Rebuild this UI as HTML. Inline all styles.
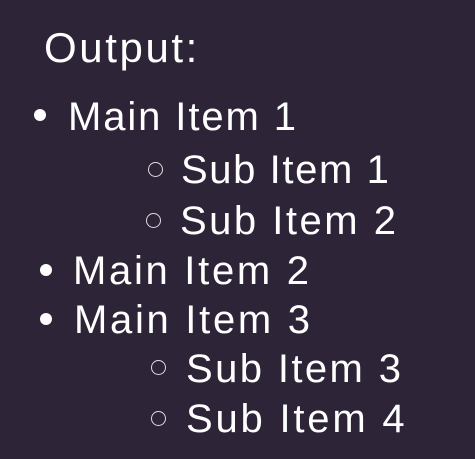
<!DOCTYPE html>
<html><head><meta charset="utf-8"><style>
html,body{margin:0;padding:0;}
body{width:475px;height:459px;background:#2d2438;position:relative;overflow:hidden;font-family:"Liberation Sans",sans-serif;color:#fff;}
.t{position:absolute;line-height:1;white-space:nowrap;font-size:40px;letter-spacing:1.7px;}
.d{position:absolute;width:12px;height:12px;border-radius:50%;background:#fff;}
.c{position:absolute;border-radius:50%;border:1.5px solid #ddd;box-sizing:border-box;width:15px;height:15px;}
</style></head><body>
<div class="t" style="left:44px;top:27px;font-size:42px;letter-spacing:2.6px">Output:</div>

<div class="d" style="left:34px;top:109px"></div>
<div class="t" style="left:68px;top:97px;letter-spacing:1.9px">Main Item 1</div>

<div class="c" style="left:148px;top:162px"></div>
<div class="t" style="left:181px;top:150px;letter-spacing:1.6px">Sub Item 1</div>

<div class="c" style="left:146px;top:213px"></div>
<div class="t" style="left:180px;top:201px;letter-spacing:2.5px">Sub Item 2</div>

<div class="d" style="left:40px;top:264px"></div>
<div class="t" style="left:73px;top:251px;letter-spacing:2.7px">Main Item 2</div>

<div class="d" style="left:40px;top:313px"></div>
<div class="t" style="left:74px;top:300px;letter-spacing:2.7px">Main Item 3</div>

<div class="c" style="left:151px;top:360px"></div>
<div class="t" style="left:186px;top:349px;letter-spacing:2.4px">Sub Item 3</div>

<div class="c" style="left:151px;top:411px"></div>
<div class="t" style="left:186px;top:399px;letter-spacing:2.8px">Sub Item 4</div>
</body></html>
